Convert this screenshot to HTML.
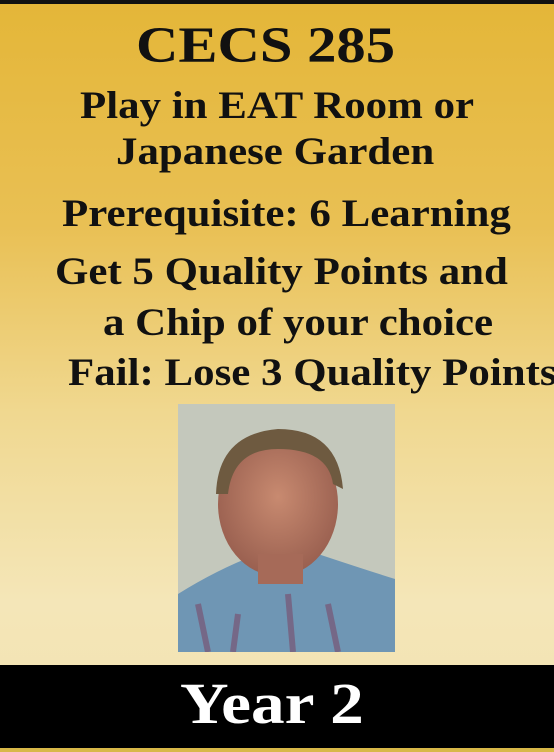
<!DOCTYPE html>
<html><head><style>
body{margin:0;width:554px;height:752px;overflow:hidden;position:relative;font-family:"Liberation Serif",serif;font-weight:bold;color:#111;
background:linear-gradient(180deg,#e4b638 0%,#e9c054 30%,#f0d890 55%,#f4e6b8 80%,#f2e2b0 100%);}
.t{position:absolute;white-space:nowrap;line-height:1;transform-origin:0 0;transform:scaleX(1.1)}
</style></head><body>
<div style="position:absolute;left:0;top:0;width:554px;height:4px;background:#111"></div>
<div class="t" style="left:136px;top:21px;font-size:51px;transform:scaleX(1.15)">CECS 285</div>
<div class="t" style="left:80px;top:86px;font-size:39px">Play in EAT Room or</div>
<div class="t" style="left:116px;top:132px;font-size:39px">Japanese Garden</div>
<div class="t" style="left:62px;top:194px;font-size:39px">Prerequisite: 6 Learning</div>
<div class="t" style="left:55px;top:252px;font-size:39px">Get 5 Quality Points and</div>
<div class="t" style="left:103px;top:303px;font-size:39px">a Chip of your choice</div>
<div class="t" style="left:68px;top:353px;font-size:39px">Fail: Lose 3 Quality Points</div>
<svg style="position:absolute;left:178px;top:404px" width="217" height="248" viewBox="0 0 217 248">
<defs><radialGradient id="f" cx="0.5" cy="0.45" r="0.55"><stop offset="0" stop-color="#c88a70"/><stop offset="1" stop-color="#9a6050"/></radialGradient></defs>
<rect width="217" height="248" fill="#c4c8bc"/>
<path d="M0 190 Q40 165 80 150 L140 150 Q185 165 217 175 L217 248 L0 248Z" fill="#6f96b4"/>
<path d="M20 200 L30 248 M60 210 L55 248 M150 200 L160 248 M110 190 L115 248" stroke="#7a4a6a" stroke-width="6" opacity="0.6"/>
<ellipse cx="100" cy="100" rx="60" ry="72" fill="url(#f)"/>
<path d="M38 90 Q40 30 100 25 Q160 25 165 85 L155 80 Q150 45 100 45 Q55 45 50 90Z" fill="#6e5a40"/>
<rect x="80" y="150" width="45" height="30" fill="#a66a58"/>
</svg>
<div style="position:absolute;left:0;top:665px;width:554px;height:83px;background:#000"></div>
<div style="position:absolute;left:0;top:748px;width:554px;height:4px;background:#d8b848"></div>
<div class="t" style="left:180px;top:675px;font-size:58px;color:#fff;transform:scaleX(1.16)">Year 2</div>
</body></html>
